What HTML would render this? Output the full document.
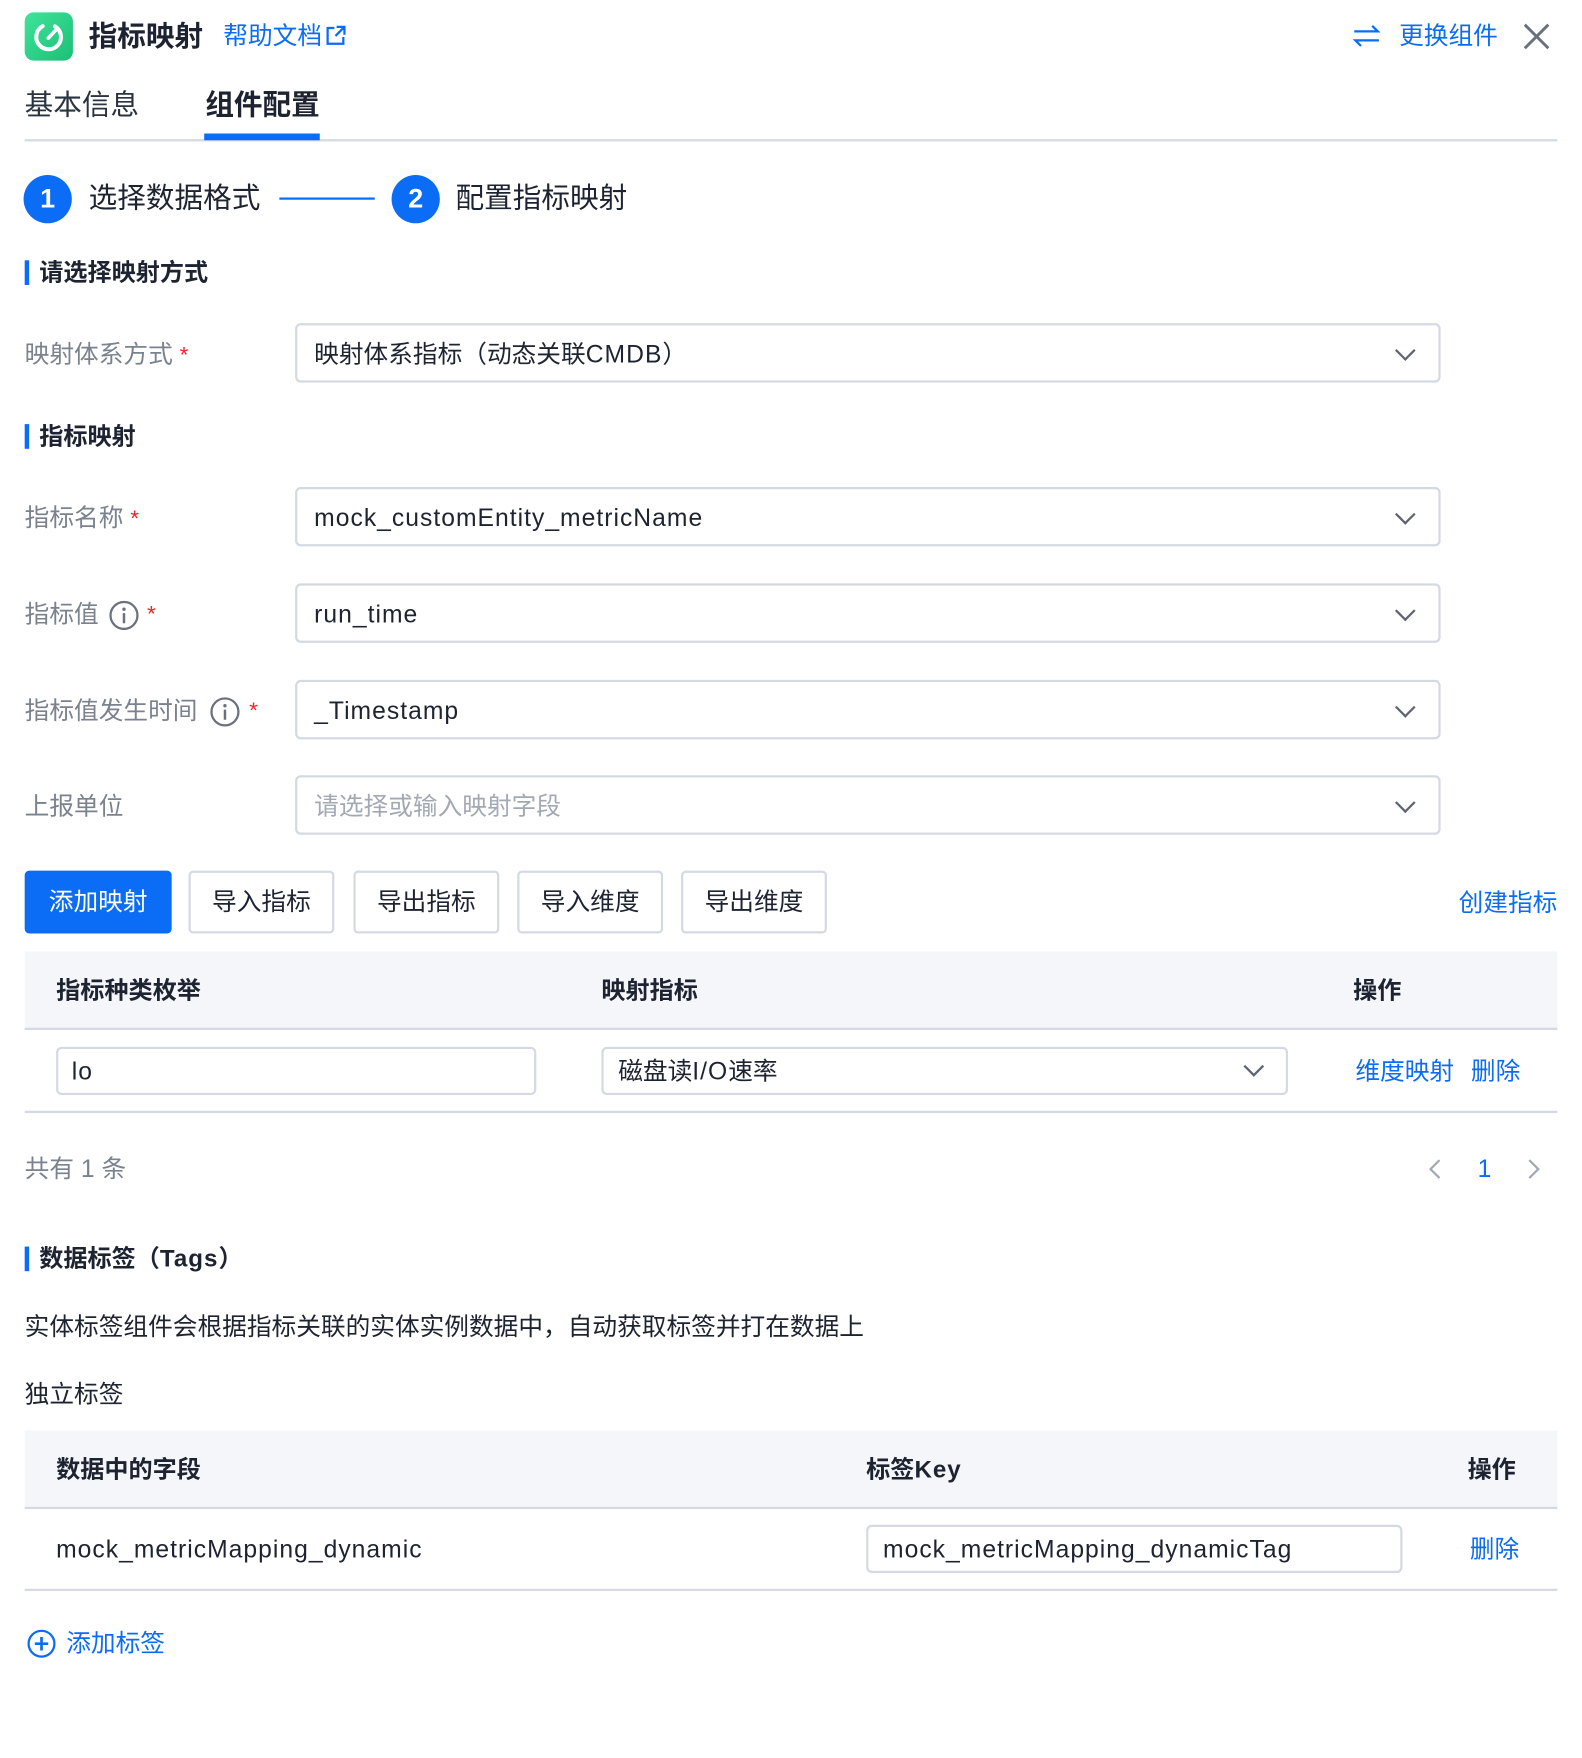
<!DOCTYPE html>
<html><head><meta charset="utf-8"><style>
html,body{margin:0;padding:0;background:#fff;overflow:hidden}
body{width:1582px;height:1758px;position:relative}
#w{position:absolute;left:0;top:0;width:1410px;height:1567px;transform:scale(1.12199);transform-origin:0 0;font-family:"Liberation Sans","Noto Sans CJK SC",sans-serif;color:#1d2330}
.a{position:absolute;white-space:nowrap}
.t{font-size:22px;line-height:30px;height:30px}
.lt{letter-spacing:0.9px}
.lbl{color:#7a828e}
.blue{color:#0b6cf5}
.star{color:#f5222d;font-size:20px}
.h{font-weight:bold;font-size:21.5px;line-height:28px}
.bar{position:absolute;left:22px;width:4px;height:22px;background:#0b6cf5}
.sel{position:absolute;left:263px;height:53px;border:2px solid #d5d9e2;border-radius:5px;box-sizing:border-box;width:1021px}
.sel span{position:absolute;left:15px;top:11px;font-size:22px;line-height:30px}
.chev{position:absolute;width:11px;height:11px;border-right:2px solid #5d6470;border-bottom:2px solid #5d6470;transform:rotate(45deg)}
.btn{position:absolute;top:776px;height:56px;width:130px;box-sizing:border-box;border:2px solid #d5d9e2;border-radius:4px;text-align:center;font-size:22px;line-height:52px;color:#1d2330}
.th{position:absolute;left:22px;width:1366px;background:#f4f6fa;border-bottom:2px solid #d5d9e2}
.inp{position:absolute;border:2px solid #d5d9e2;border-radius:5px;box-sizing:border-box}
</style></head><body><div id="w">
<div class="a" style="left:22px;top:11px;width:43px;height:43px;border-radius:8px;background:linear-gradient(135deg,#3fe39a,#1cbf76)"></div>
<svg class="a" style="left:22px;top:11px" width="43" height="43" viewBox="0 0 43 43"><path d="M27 12.5 A11 11 0 1 1 16 12.3" fill="none" stroke="#fff" stroke-width="3.6" stroke-linecap="round"/><path d="M21 23 L27.5 16" stroke="#fff" stroke-width="3.2" stroke-linecap="round"/></svg>
<div class="a" style="left:79px;top:16px;font-size:25.5px;font-weight:bold;line-height:34px">指标映射</div>
<div class="a t blue" style="left:199px;top:17px">帮助文档</div>
<svg class="a" style="left:289px;top:22px" width="20" height="20" viewBox="0 0 20 20"><path d="M9 3H3v14h14v-6" fill="none" stroke="#0b6cf5" stroke-width="2"/><path d="M11 2h7v7M18 2l-8 8" fill="none" stroke="#0b6cf5" stroke-width="2"/></svg>
<svg class="a" style="left:1205px;top:20px" width="26" height="24" viewBox="0 0 26 24"><path d="M2 8h21l-5-5M24 16H3l5 5" fill="none" stroke="#0b6cf5" stroke-width="2"/></svg>
<div class="a t blue" style="left:1247px;top:17px">更换组件</div>
<svg class="a" style="left:1357px;top:20px" width="25" height="25" viewBox="0 0 25 25"><path d="M2 2L23 23M23 2L2 23" stroke="#6b717c" stroke-width="2.6"/></svg>
<div class="a" style="left:22px;top:77px;font-size:25.5px;line-height:34px;color:#2a3340">基本信息</div>
<div class="a" style="left:183px;top:77px;font-size:25.5px;line-height:34px;font-weight:bold">组件配置</div>
<div class="a" style="left:22px;top:124px;width:1366px;height:2px;background:#d5d9e2"></div>
<div class="a" style="left:182px;top:119px;width:103px;height:6px;background:#0b6cf5"></div>
<div class="a" style="left:21px;top:156px;width:43px;height:43px;border-radius:50%;background:#0b6cf5;color:#fff;text-align:center;font-size:24px;font-weight:bold;line-height:43px">1</div>
<div class="a" style="left:79px;top:160px;font-size:25.5px;line-height:34px">选择数据格式</div>
<div class="a" style="left:249px;top:176px;width:85px;height:2px;background:#0b6cf5"></div>
<div class="a" style="left:349px;top:156px;width:43px;height:43px;border-radius:50%;background:#0b6cf5;color:#fff;text-align:center;font-size:24px;font-weight:bold;line-height:43px">2</div>
<div class="a" style="left:406px;top:160px;font-size:25.5px;line-height:34px">配置指标映射</div>
<div class="bar" style="top:232px"></div>
<div class="a h" style="left:35px;top:229px">请选择映射方式</div>
<div class="a t lbl" style="left:22px;top:301px">映射体系方式 <span class="star">*</span></div>
<div class="sel" style="top:288px"><span>映射体系指标（动态关联<span class="lt" style="position:static;font-size:22px">CMDB</span>）</span><div class="chev" style="left:981px;top:16px"></div></div>
<div class="bar" style="top:378px"></div>
<div class="a h" style="left:35px;top:375px">指标映射</div>
<div class="a t lbl" style="left:22px;top:447px">指标名称 <span class="star">*</span></div>
<div class="sel" style="top:434px"><span class="lt">mock_customEntity_metricName</span><div class="chev" style="left:981px;top:16px"></div></div>
<div class="a t lbl" style="left:22px;top:533px">指标值</div>
<svg class="a" style="left:97px;top:535px" width="27" height="27" viewBox="0 0 27 27"><circle cx="13.5" cy="13.5" r="12" fill="none" stroke="#6b717c" stroke-width="2"/><circle cx="13.5" cy="8" r="1.5" fill="#6b717c"/><path d="M13.5 11.5v9" stroke="#6b717c" stroke-width="2.2"/></svg>
<div class="a star" style="left:131px;top:533px;line-height:30px">*</div>
<div class="sel" style="top:520px"><span class="lt">run_time</span><div class="chev" style="left:981px;top:16px"></div></div>
<div class="a t lbl" style="left:22px;top:619px">指标值发生时间</div>
<svg class="a" style="left:187px;top:621px" width="27" height="27" viewBox="0 0 27 27"><circle cx="13.5" cy="13.5" r="12" fill="none" stroke="#6b717c" stroke-width="2"/><circle cx="13.5" cy="8" r="1.5" fill="#6b717c"/><path d="M13.5 11.5v9" stroke="#6b717c" stroke-width="2.2"/></svg>
<div class="a star" style="left:222px;top:619px;line-height:30px">*</div>
<div class="sel" style="top:606px"><span class="lt">_Timestamp</span><div class="chev" style="left:981px;top:16px"></div></div>
<div class="a t lbl" style="left:22px;top:704px">上报单位</div>
<div class="sel" style="top:691px"><span style="color:#a3a9b3">请选择或输入映射字段</span><div class="chev" style="left:981px;top:16px"></div></div>
<div class="btn" style="left:22px;width:131px;background:#0b6cf5;border-color:#0b6cf5;color:#fff">添加映射</div>
<div class="btn" style="left:168px">导入指标</div>
<div class="btn" style="left:315px">导出指标</div>
<div class="btn" style="left:461px">导入维度</div>
<div class="btn" style="left:607px">导出维度</div>
<div class="a t blue" style="left:1300px;top:790px">创建指标</div>
<div class="th" style="top:848px;height:68px"></div>
<div class="a h" style="left:50px;top:869px">指标种类枚举</div>
<div class="a h" style="left:536px;top:869px">映射指标</div>
<div class="a h" style="left:1206px;top:869px">操作</div>
<div class="inp" style="left:50px;top:933px;width:428px;height:43px"></div>
<div class="a t lt" style="left:64px;top:940px">lo</div>
<div class="inp" style="left:536px;top:933px;width:612px;height:43px"></div>
<div class="a t" style="left:551px;top:940px">磁盘读<span class="lt">I/O</span>速率</div>
<div class="chev" style="left:1111px;top:944px"></div>
<div class="a t blue" style="left:1208px;top:940px">维度映射</div>
<div class="a t blue" style="left:1311px;top:940px">删除</div>
<div class="a" style="left:22px;top:990px;width:1366px;height:2px;background:#d5d9e2"></div>
<div class="a t lbl" style="left:22px;top:1027px">共有 1 条</div>
<svg class="a" style="left:1272px;top:1032px" width="14" height="20" viewBox="0 0 14 20"><path d="M11 2L3 10l8 8" fill="none" stroke="#a3a9b3" stroke-width="2"/></svg>
<div class="a t blue" style="left:1317px;top:1027px">1</div>
<svg class="a" style="left:1360px;top:1032px" width="14" height="20" viewBox="0 0 14 20"><path d="M3 2l8 8-8 8" fill="none" stroke="#a3a9b3" stroke-width="2"/></svg>
<div class="bar" style="top:1111px"></div>
<div class="a h" style="left:35px;top:1108px">数据标签（<span class="lt">Tags</span>）</div>
<div class="a t" style="left:22px;top:1168px;color:#1d2330">实体标签组件会根据指标关联的实体实例数据中，自动获取标签并打在数据上</div>
<div class="a t" style="left:22px;top:1228px">独立标签</div>
<div class="th" style="top:1275px;height:68px"></div>
<div class="a h" style="left:50px;top:1296px">数据中的字段</div>
<div class="a h" style="left:772px;top:1296px">标签<span class="lt">Key</span></div>
<div class="a h" style="left:1308px;top:1296px">操作</div>
<div class="a t lt" style="left:50px;top:1366px">mock_metricMapping_dynamic</div>
<div class="inp" style="left:772px;top:1359px;width:478px;height:43px"></div>
<div class="a t lt" style="left:787px;top:1366px">mock_metricMapping_dynamicTag</div>
<div class="a t blue" style="left:1310px;top:1366px">删除</div>
<div class="a" style="left:22px;top:1416px;width:1366px;height:2px;background:#d5d9e2"></div>
<svg class="a" style="left:24px;top:1452px" width="26" height="26" viewBox="0 0 26 26"><circle cx="13" cy="13" r="11.5" fill="none" stroke="#0b6cf5" stroke-width="2"/><path d="M13 7v12M7 13h12" stroke="#0b6cf5" stroke-width="2.4"/></svg>
<div class="a t blue" style="left:59px;top:1450px">添加标签</div>
</div></body></html>
